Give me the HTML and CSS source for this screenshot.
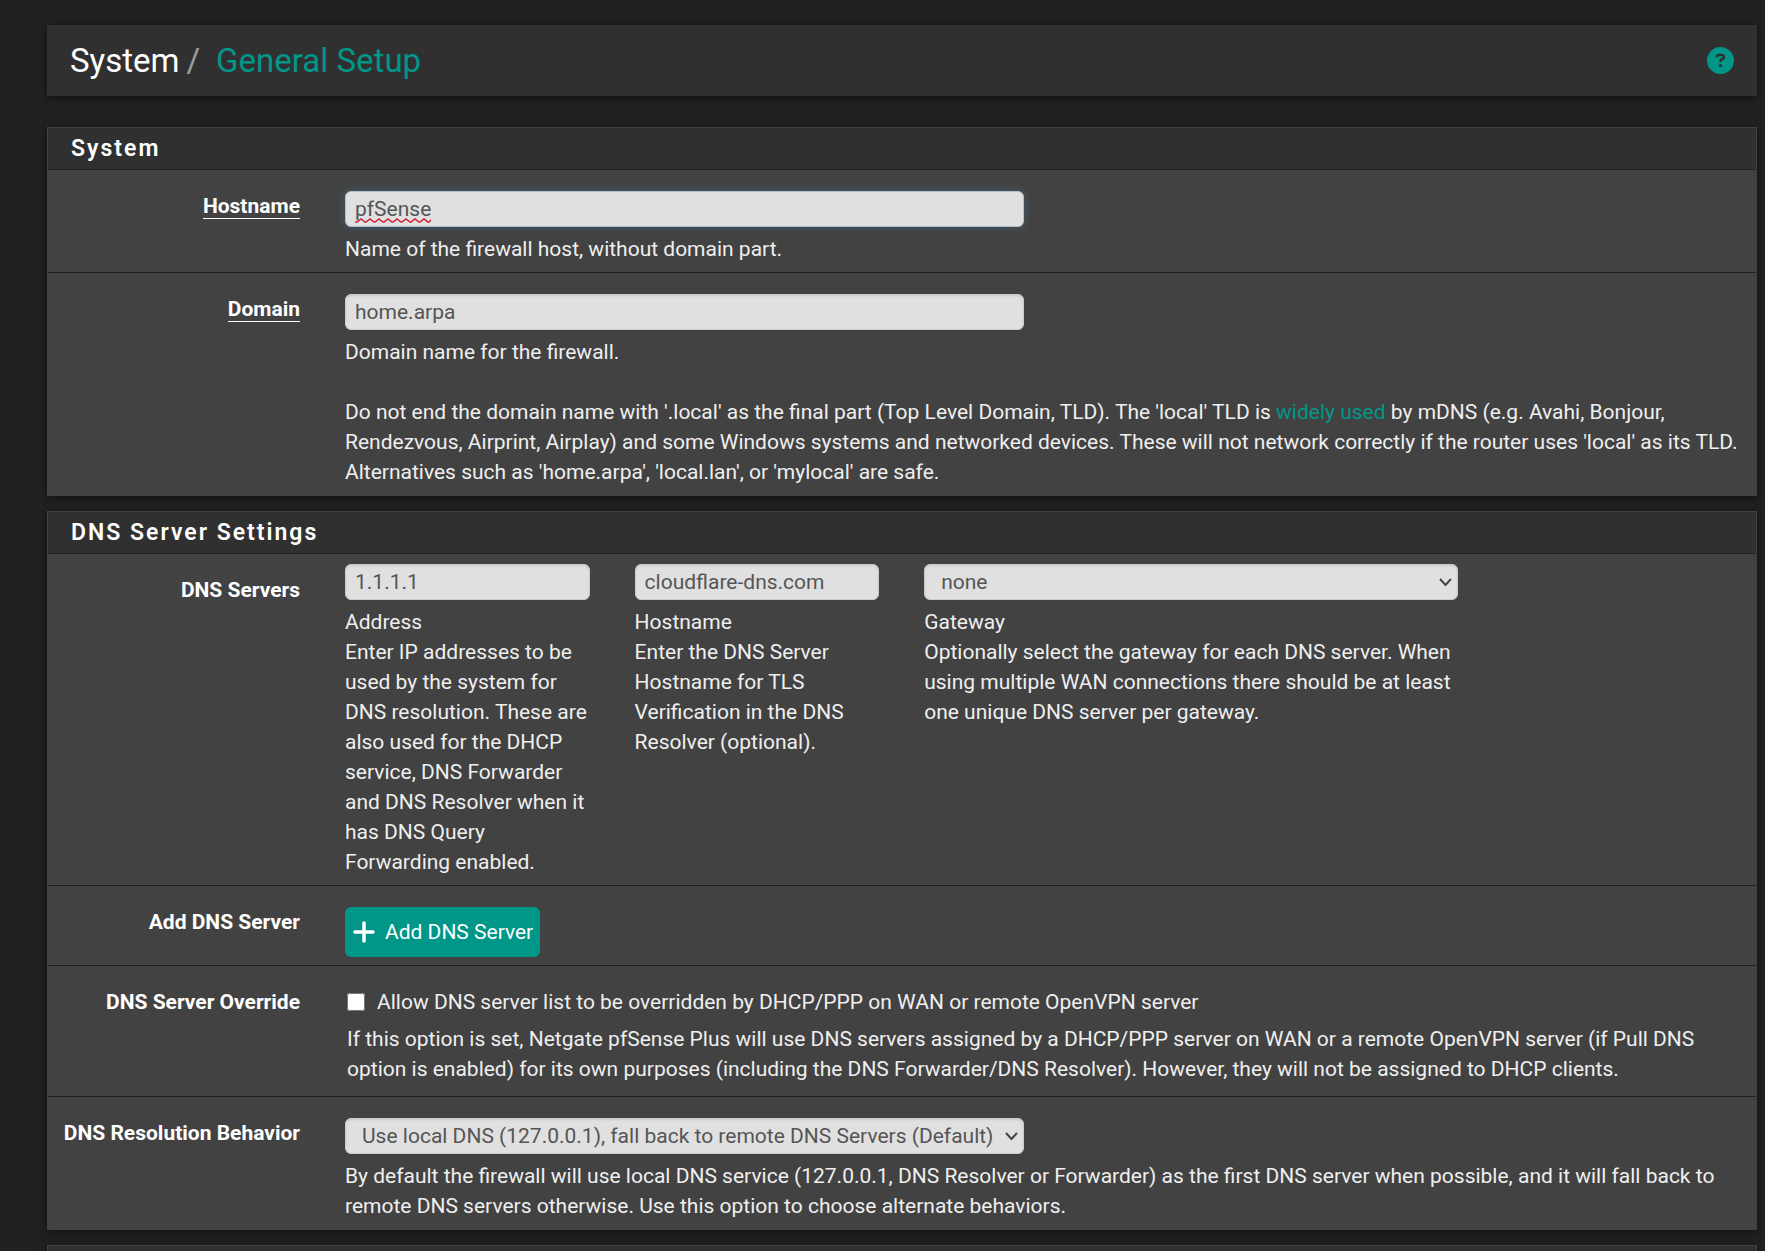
FILE: index.html
```html
<!DOCTYPE html>
<html lang="en">
<head>
<meta charset="utf-8">
<meta name="viewport" content="width=device-width, initial-scale=1">
<title>System: General Setup</title>
<link rel="stylesheet" href="styles.css">
</head>
<body>
<header class="page-header">
  <h1 class="breadcrumb">
    <span class="crumb">System</span>
    <span class="crumb-sep">/</span>
    <a class="crumb-current" href="#">General Setup</a>
  </h1>
  <a class="help-link" href="#" aria-label="Help">
    <svg viewBox="0 0 512 512" width="27" height="27" aria-hidden="true"><path fill="currentColor" d="M256 512A256 256 0 1 0 256 0a256 256 0 1 0 0 512zM169.8 165.3c7.9-22.3 29.1-37.3 52.8-37.3h58.3c34.9 0 63.1 28.3 63.1 63.1c0 22.6-12.1 43.5-31.7 54.8L280 264.4c-.2 13-10.9 23.6-24 23.6c-13.3 0-24-10.7-24-24V250.500c0-8.600 4.600-16.500 12.100-20.800l44.300-25.400c4.700-2.700 7.600-7.700 7.600-13.100c0-8.400-6.800-15.100-15.100-15.100H222.600c-3.400 0-6.400 2.100-7.500 5.300l-.4 1.200c-4.400 12.500-18.200 19-30.600 14.600s-19-18.200-14.600-30.600l.4-1.200zM224 352a32 32 0 1 1 64 0 32 32 0 1 1-64 0z"/></svg>
  </a>
</header>

<form class="settings">
  <section class="panel">
    <h2 class="panel-title">System</h2>
    <div class="row">
      <label class="row-label" for="hostname"><span class="required">Hostname</span></label>
      <div class="row-body">
        <div class="half"><input class="control misspelled" id="hostname" type="text" value="pfSense" spellcheck="false"></div>
        <p class="hint">Name of the firewall host, without domain part.</p>
      </div>
    </div>
    <div class="row">
      <label class="row-label" for="domain"><span class="required">Domain</span></label>
      <div class="row-body">
        <div class="half"><input class="control" id="domain" type="text" value="home.arpa" spellcheck="false"></div>
        <p class="hint">Domain name for the firewall.</p>
        <p class="note">Do not end the domain name with '.local' as the final part (Top Level Domain, TLD). The 'local' TLD is <a class="link" href="#">widely used</a> by mDNS (e.g. Avahi, Bonjour, Rendezvous, Airprint, Airplay) and some Windows systems and networked devices. These will not network correctly if the router uses 'local' as its TLD. Alternatives such as 'home.arpa', 'local.lan', or 'mylocal' are safe.</p>
      </div>
    </div>
  </section>

  <section class="panel">
    <h2 class="panel-title">DNS Server Settings</h2>
    <div class="row row-servers">
      <div class="row-label">DNS Servers</div>
      <div class="row-body">
        <div class="narrow">
          <input class="control" id="dns-address" type="text" value="1.1.1.1">
          <label class="hint" for="dns-address">Address<br>Enter IP addresses to be used by the system for DNS resolution. These are also used for the DHCP service, DNS Forwarder and DNS Resolver when it has DNS Query Forwarding enabled.</label>
        </div>
        <div class="narrow">
          <input class="control" id="dns-hostname" type="text" value="cloudflare-dns.com" spellcheck="false">
          <label class="hint" for="dns-hostname">Hostname<br>Enter the DNS Server Hostname for TLS Verification in the DNS Resolver (optional).</label>
        </div>
        <div class="wide">
          <select class="control" id="dns-gateway"><option>none</option></select>
          <label class="hint" for="dns-gateway">Gateway<br>Optionally select the gateway for each DNS server. When using multiple WAN connections there should be at least one unique DNS server per gateway.</label>
        </div>
      </div>
    </div>
    <div class="row">
      <div class="row-label">Add DNS Server</div>
      <div class="row-body">
        <button class="button" type="button">
          <svg viewBox="0 0 22 22" width="22" height="22" aria-hidden="true"><path d="M11 2v18M2 11h18" fill="none" stroke="currentColor" stroke-width="3.500" stroke-linecap="round"/></svg>
          Add DNS Server
        </button>
      </div>
    </div>
    <div class="row row-check">
      <div class="row-label">DNS Server Override</div>
      <div class="row-body">
        <label class="check"><input class="checkbox" type="checkbox">Allow DNS server list to be overridden by DHCP/PPP on WAN or remote OpenVPN server</label>
        <p class="hint">If this option is set, Netgate pfSense Plus will use DNS servers assigned by a DHCP/PPP server on WAN or a remote OpenVPN server (if Pull DNS option is enabled) for its own purposes (including the DNS Forwarder/DNS Resolver). However, they will not be assigned to DHCP clients.</p>
      </div>
    </div>
    <div class="row">
      <label class="row-label" for="resolution">DNS Resolution Behavior</label>
      <div class="row-body">
        <div class="half"><select class="control" id="resolution"><option>Use local DNS (127.0.0.1), fall back to remote DNS Servers (Default)</option></select></div>
        <p class="hint">By default the firewall will use local DNS service (127.0.0.1, DNS Resolver or Forwarder) as the first DNS server when possible, and it will fall back to remote DNS servers otherwise. Use this option to choose alternate behaviors.</p>
      </div>
    </div>
  </section>

  <section class="panel panel-next"></section>
</form>
</body>
</html>
```
FILE: styles.css
```css
* { box-sizing: border-box; }

body {
  margin: 0;
  padding: 25px 8px 0 47px;
  background: #212121;
  color: #efefef;
  font: 21px/30px Roboto, "Liberation Sans", sans-serif;
}

h1, h2, p { margin: 0; }

.page-header {
  display: flex;
  align-items: center;
  justify-content: space-between;
  min-height: 71px;
  padding: 0 23px;
  background: #303030;
  box-shadow: 0 2px 8px rgba(0, 0, 0, .5);
}

.breadcrumb {
  display: flex;
  font-size: 33px;
  line-height: 40px;
  font-weight: 400;
  color: #fff;
}
.crumb-sep { padding: 0 16px 0 7px; color: #9e9e9e; }
.crumb-current, .link { color: #009688; text-decoration: none; }

.help-link { display: flex; color: #009688; }

.settings { padding-top: 31px; }

.panel {
  margin-bottom: 15px;
  border: 1px solid #424242;
  background: #424242;
  box-shadow: 0 2px 8px rgba(0, 0, 0, .5);
}
.panel-next { height: 60px; margin-bottom: 0; background: #303030; }

.panel-title {
  padding: 6px 23px 5px;
  background: #303030;
  color: #fff;
  font-size: 23px;
  line-height: 30px;
  font-weight: 600;
  letter-spacing: 2px;
}

.row {
  display: grid;
  grid-template-columns: 252px minmax(0, 1fr);
  column-gap: 45px;
  padding: 21px 8px 8px 0;
  border-top: 1px solid #212121;
}
.row-label { color: #fff; font-weight: 700; text-align: right; }
.required { border-bottom: 1px solid #fff; }

.row-body {
  display: grid;
  grid-template-columns: repeat(10, minmax(0, 1fr));
  column-gap: 45px;
  align-content: start;
}
.row-body > * { grid-column: 1 / -1; }
.row-body > .half { grid-column: span 5; }
.row-body > .narrow { grid-column: span 2; }
.row-body > .wide { grid-column: span 4; }

.row-servers { padding-top: 10px; }
.row-servers .row-label { padding-top: 11px; }

.control {
  display: block;
  width: 100%;
  height: 36px;
  padding: 0 9px;
  border: 1px solid #ccc;
  border-radius: 6px;
  background-color: #e0e0e0;
  box-shadow: inset 0 1px 2px rgba(0, 0, 0, .1);
  color: #555;
  font: inherit;
  outline: 0;
}
select.control {
  appearance: none;
  padding: 0 30px 0 16px;
  background-image: url("data:image/svg+xml,%3Csvg xmlns='http://www.w3.org/2000/svg' width='13' height='9'%3E%3Cpath d='M1 1l5.500 6L12 1' fill='none' stroke='%23444' stroke-width='2'/%3E%3C/svg%3E");
  background-position: right 5px center;
  background-repeat: no-repeat;
}
/* Spelling mark under the host name */
.misspelled {
  border-color: #a9c0d1;
  background-image: url("data:image/svg+xml,%3Csvg xmlns='http://www.w3.org/2000/svg' width='76' height='5'%3E%3Cpath d='M0 4L2 4L6 1L10 4L11 4L15 1L19 4L20 4L24 1L28 4L29 4L33 1L37 4L38 4L42 1L46 4L47 4L51 1L55 4L56 4L60 1L64 4L65 4L69 1L73 4L74 4L76 2' fill='none' stroke='%23d01f33' stroke-width='1.500'/%3E%3C/svg%3E");
  background-position: 9px 26px;
  background-repeat: no-repeat;
  box-shadow: 0 0 8px rgba(102, 175, 233, .25);
}

.hint { display: block; margin-top: 7px; }
.note { margin-top: 30px; }

.button {
  justify-self: start;
  display: flex;
  align-items: center;
  gap: 10px;
  height: 50px;
  padding: 0 7px 0 8px;
  border: 0;
  border-radius: 6px;
  background: #009688;
  color: #fff;
  font: inherit;
}

.row-check { padding-bottom: 12px; }
.row-check .row-body { padding-left: 2px; }
.check { display: flex; align-items: center; gap: 12px; }
.checkbox { width: 18px; height: 18px; margin: 0; }
```
